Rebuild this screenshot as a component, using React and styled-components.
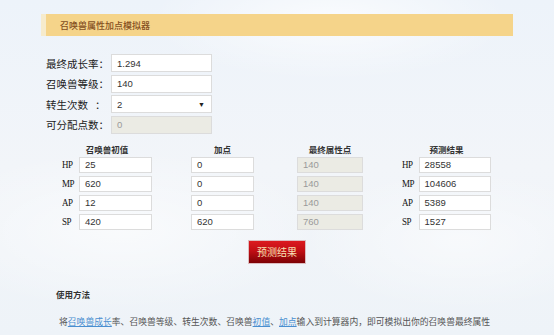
import React from 'react';
import styled, { createGlobalStyle } from 'styled-components';

const GlobalStyle = createGlobalStyle`
  html, body {
    margin: 0;
    padding: 0;
  }
  body {
    width: 554px;
    height: 335px;
    overflow: hidden;
    font-family: "Liberation Sans", "Noto Sans CJK SC", sans-serif;
    background:
      radial-gradient(ellipse 180px 60px at 330px 20px, rgba(255,255,255,0.7), rgba(255,255,255,0)),
      radial-gradient(ellipse 200px 80px at 120px 230px, rgba(255,255,255,0.6), rgba(255,255,255,0)),
      radial-gradient(ellipse 160px 70px at 460px 240px, rgba(255,255,255,0.5), rgba(255,255,255,0)),
      linear-gradient(180deg, #edf3fa 0%, #f2f5f9 50%, #eef3f8 100%);
  }
`;

const Page = styled.div`
  padding: 14px 41px 0 41px;
`;

const TitleBar = styled.div`
  height: 22px;
  display: flex;
  align-items: center;
  background: #f5d48a;
  border-left: 5px solid #f6ebcc;
  padding-left: 14px;
  font-family: "Noto Sans CJK SC", sans-serif;
  font-size: 9px;
  font-weight: 500;
  color: #85501f;
`;

const Form = styled.div`
  margin-top: 18px;
  padding-left: 5px;
  display: flex;
  flex-direction: column;
  gap: 2.5px;
`;

const FormRow = styled.div`
  display: flex;
  align-items: center;
  height: 18px;
`;

const Label = styled.span`
  width: 65px;
  font-family: "Noto Sans CJK SC", sans-serif;
  font-size: 10.5px;
  color: #222;
  white-space: pre;
`;

const Field = styled.div`
  box-sizing: border-box;
  width: ${p => p.w || 101}px;
  height: ${p => p.h || 18}px;
  border: 1px solid #dcdcdc;
  background: ${p => (p.disabled ? '#ebebe4' : '#fff')};
  color: ${p => (p.disabled ? '#9a9a9a' : '#333')};
  font-family: "Liberation Sans", Arial, sans-serif;
  font-size: 9.5px;
  display: flex;
  align-items: center;
  justify-content: space-between;
  padding: 0 6px 0 5px;
`;

const Arrow = styled.span`
  font-size: 7px;
  color: #222;
`;

const Table = styled.div`
  display: flex;
  margin-top: 9px;
`;

const Group = styled.div`
  margin-left: ${p => p.offset}px;
  width: ${p => p.w}px;
  display: flex;
  flex-direction: column;
  gap: 3px;
`;

const ColHead = styled.div`
  height: 13px;
  text-align: center;
  font-family: "Noto Sans CJK SC", sans-serif;
  font-size: 8.5px;
  font-weight: 700;
  color: #333;
  margin-bottom: -2px;
`;

const CellRow = styled.div`
  display: flex;
  align-items: center;
  height: 16px;
`;

const StatLabel = styled.span`
  width: 17px;
  font-family: "Liberation Serif", "DejaVu Serif", serif;
  font-size: 10.5px;
  color: #111;
  letter-spacing: -0.5px;
  transform: scaleX(0.85);
  transform-origin: left center;
`;

const ButtonRow = styled.div`
  display: flex;
  justify-content: center;
  margin-top: 11px;
  margin-left: -41px;
  margin-right: -41px;
`;

const PredictButton = styled.button`
  width: 56px;
  height: 22px;
  border: 0;
  padding: 0;
  background: linear-gradient(180deg, #dc1a1f 0%, #c10e14 45%, #7d0205 100%);
  box-shadow: 0 0 0 1px rgba(160, 20, 20, 0.25);
  color: #f7e2b4;
  font-family: "Noto Sans CJK SC", sans-serif;
  font-size: 10px;
`;

const Usage = styled.div`
  margin-top: 25px;
  padding-left: 15px;
`;

const UsageTitle = styled.div`
  font-family: "Noto Sans CJK SC", sans-serif;
  font-size: 8.5px;
  font-weight: 700;
  color: #333;
`;

const UsageText = styled.p`
  margin: 15px 0 0 3px;
  font-family: "Noto Sans CJK SC", sans-serif;
  font-size: 8.8px;
  color: #555;
  white-space: nowrap;
`;

const Link = styled.a`
  color: #4a8fd0;
  text-decoration: underline;
`;

const groups = [
  { head: '召唤兽初值', offset: 21, w: 90, labels: true, fieldW: 73, values: ['25', '620', '12', '420'] },
  { head: '加点', offset: 39, w: 63, fieldW: 63, values: ['0', '0', '0', '620'] },
  { head: '最终属性点', offset: 43, w: 66, fieldW: 66, disabled: true, values: ['140', '140', '140', '760'] },
  { head: '预测结果', offset: 39, w: 89, labels: true, fieldW: 74, values: ['28558', '104606', '5389', '1527'] },
];

const stats = ['HP', 'MP', 'AP', 'SP'];

export default function App() {
  return (
    <>
      <GlobalStyle />
      <Page>
        <TitleBar>召唤兽属性加点模拟器</TitleBar>
        <Form>
          <FormRow>
            <Label>最终成长率：</Label>
            <Field>1.294</Field>
          </FormRow>
          <FormRow>
            <Label>召唤兽等级：</Label>
            <Field>140</Field>
          </FormRow>
          <FormRow>
            <Label>{'转生次数   ：'}</Label>
            <Field>
              <span>2</span>
              <Arrow>▼</Arrow>
            </Field>
          </FormRow>
          <FormRow>
            <Label>可分配点数：</Label>
            <Field disabled>0</Field>
          </FormRow>
        </Form>
        <Table>
          {groups.map(g => (
            <Group key={g.head} offset={g.offset} w={g.w}>
              <ColHead>{g.head}</ColHead>
              {g.values.map((v, i) => (
                <CellRow key={i}>
                  {g.labels && <StatLabel>{stats[i]}</StatLabel>}
                  <Field w={g.fieldW} h={16} disabled={g.disabled}>{v}</Field>
                </CellRow>
              ))}
            </Group>
          ))}
        </Table>
        <ButtonRow>
          <PredictButton>预测结果</PredictButton>
        </ButtonRow>
        <Usage>
          <UsageTitle>使用方法</UsageTitle>
          <UsageText>
            将<Link>召唤兽成长</Link>率、召唤兽等级、转生次数、召唤兽<Link>初值</Link>、<Link>加点</Link>输入到计算器内，即可模拟出你的召唤兽最终属性
          </UsageText>
        </Usage>
      </Page>
    </>
  );
}
